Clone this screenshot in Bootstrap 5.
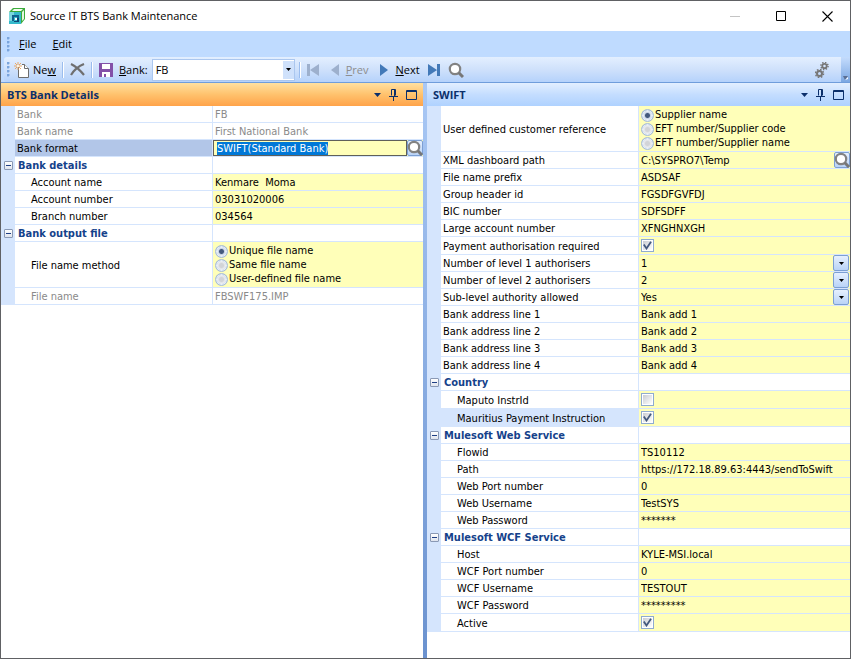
<!DOCTYPE html>
<html lang="en">
<head>
<meta charset="utf-8">
<meta name="viewport" content="width=device-width, initial-scale=1">
<title>Source IT BTS Bank Maintenance</title>
<link href="https://cdn.jsdelivr.net/npm/bootstrap@5.3.0/dist/css/bootstrap.min.css" rel="stylesheet">
<style>
  :root { --line: #d5e5fd; --field: #ffffb9; --navy: #15428b; }
  body { font-family: "Open Sans", "Noto Sans", sans-serif; font-size: 11px; line-height: 16px; color: #000; }
  button, input, select { font: inherit; color: inherit; }
  svg { display: block; flex: none; }
  .app-window { border: 1px solid #606164; background: #fff; }
  .title-strip { height: 30px; padding: 0 12px 0 8px; }
  .title-strip h1 { font-size: 11px; font-weight: 400; line-height: 16px; }
  .win-btn { border: 0; background: none; padding: 0; width: 46px; height: 28px; display: flex; align-items: center; justify-content: center; }
  .win-btns { margin-right: -12px; }
  .menu-strip { background: #bfdbff; height: 26px; padding-left: 6px; }
  .menu-strip a { color: #000; text-decoration: none; margin-left: 9px; margin-right: 7px; }
  .grip { width: 3px; height: 15px; background: radial-gradient(circle at 1px 1px, #7aa5dd 1px, transparent 2px) 0 0 / 3px 4px; flex: none; }
  .tool-wrap { background: #bfdbff; height: 26px; padding-left: 3px; border-bottom: 1px solid #6f9ddb; }
  .tool-strip { background: linear-gradient(#e3efff, #cfe1fb 50%, #b5d2fb); padding-left: 3px; border-radius: 3px 0 0 3px; }
  .tool-end { width: 9px; background: linear-gradient(#c4dcfd, #7ba7e2); }
  .tool-btn { border: 0; background: none; padding: 0; display: flex; align-items: center; gap: 3px; color: #000; }
  .tool-btn:disabled { color: #8d8d8d; }
  .tool-gears { padding-right: 12px; }
  .tool-sep { width: 2px; height: 16px; margin: 0 6px; background: #9bbdee; border-right: 1px solid #fff; }
  .bank-label { padding: 0 4px 0 6px; }
  .bank-box { width: 143px; height: 22px; border: 1px solid #abc7ef; background: #fff; }
  .bank-box input { border: 0; min-width: 0; padding: 0 3px; outline: 0; }
  .bank-box button { width: 12px; border: 0; padding: 0; background: #cfe1fb; margin: 1px 0; }
  .pane-head { height: 23px; padding: 0 6px; color: #0b2f6b; background: linear-gradient(#e3efff, #c4ddff 50%, #afd2ff); }
  .pane-head h2 { font-size: 11px; font-weight: 700; line-height: 16px; }
  .pane-head.current { background: linear-gradient(#ffe0a0, #ffc26d 50%, #ffa34a); }
  .pane-head button { border: 0; background: none; padding: 0; }
  .splitter { width: 4px; background: linear-gradient(#a9c8f5, #6b92cf); }
  .pane { min-width: 0; flex: 1 1 0; }
  .pane.wide { flex-basis: 1px; }
  .prop-grid { font-family: "DejaVu Sans Condensed", Tahoma, "Noto Sans", sans-serif; font-size: 11px; line-height: 14px; background: #fff; }
  .prop-row { display: grid; grid-template-columns: 14px 197px minmax(0, 1fr); min-height: 17px; background: var(--line); }
  .prop-row > .cell { background: #fff; border-bottom: 1px solid var(--line); display: flex; align-items: center; min-width: 0; white-space: nowrap; }
  .prop-row > .name { padding-left: 2px; padding-top: 2px; }
  .prop-row.sub > .name { padding-left: 16px; }
  .prop-row > .val { border-left: 1px solid var(--line); position: relative; }
  .prop-row > .val.edit { background: var(--field); }
  .prop-row.tick { min-height: 18px; }
  .prop-row.off { color: #8a8a8a; }
  .prop-row.off > .val { padding-left: 2px; padding-top: 2px; }
  .prop-row.group > .name { color: var(--navy); font-weight: 700; padding-left: 3px; }
  .prop-row.chosen > .name { background: #b2c6e8; }
  .prop-row.hot > .name { background: var(--line); }
  .prop-row .entry { border: 0; background: none; padding: 1px 2px 0; width: 100%; height: 16px; line-height: 14px; outline: 0; appearance: none; border-radius: 0; }
  .prop-row select.entry { padding-top: 2px; }
  .prop-row.chosen .entry { border: 1px solid #60605a; padding: 1px 3px 0; }
  .entry::selection { background: #0078d7; color: #fff; }
  .twist { border: 1px solid #8a99b5; border-radius: 1px; background: linear-gradient(#fff, #dfe4ee); width: 9px; height: 9px; padding: 0; margin: 0 auto; align-self: center; display: flex; align-items: center; justify-content: center; }
  .cell-btn { width: 16px; height: 16px; padding: 0; border: 1px solid #7c9fd3; border-radius: 2px; background: linear-gradient(#e6f0fe, #b9d3f7); display: flex; align-items: center; justify-content: center; flex: none; }
  .cell-btn.over { position: absolute; right: 1px; top: 0; pointer-events: none; }
  .choice { display: flex; align-items: center; height: 14px; gap: 1px; }
  .choices { padding: 2px 2px 1px; }
  .choice input { appearance: none; width: 13px; height: 13px; margin: 0; border-radius: 50%; border: 1px solid #a6bcd8; background: radial-gradient(circle, #d2d4d8 0 2px, #e2e4e8 3px, #eceef2 4px, #b4bfcf 5px); box-shadow: inset 0 0 0 1px #e4eefa; flex: none; }
  .choice input:checked { background: radial-gradient(circle, #44597d 0 2px, #c6d2e4 3px, #e9eef7 4px, #a9b9d0 5px); }
  .tick input { appearance: none; width: 13px; height: 13px; margin: 0 0 0 2px; border: 1px solid #8fabd0; background: linear-gradient(135deg, #c9ccd2, #fff) content-box, linear-gradient(#fff, #fff) padding-box; padding: 1px; }
  .tick svg { position: absolute; left: 4px; top: 4px; pointer-events: none; }
</style>
<script src="https://cdn.jsdelivr.net/npm/bootstrap@5.3.0/dist/js/bootstrap.bundle.min.js"></script>
</head>
<body>
<svg width="0" height="0" class="position-absolute" aria-hidden="true">
  <symbol id="lens" viewBox="0 0 16 16"><circle cx="7" cy="7" r="5.200" fill="#fff" stroke="#828282" stroke-width="2.200"/><path d="M10.800 10.800 15 15" stroke="#777" stroke-width="3"/></symbol>
  <symbol id="down" viewBox="0 0 7 4"><path d="M0 0h7L3.500 4z" fill="currentColor"/></symbol>
  <symbol id="pin" viewBox="0 0 9 12"><path d="M2.500 6.500V.5h4v6M5.500 1v6M0 7.500h9M4.500 7v5" fill="none" stroke="currentColor"/></symbol>
  <symbol id="box" viewBox="0 0 11 10"><path d="M.5.5h10v9H.5zM0 1.500h11" fill="none" stroke="currentColor"/></symbol>
  <symbol id="minus" viewBox="0 0 5 1"><path d="M0 0h5v1H0z" fill="#1f3f85"/></symbol>
  <symbol id="check" viewBox="0 0 9 9"><path d="M.8 3.500 3.500 7.500 8 .8" fill="none" stroke="#44597d" stroke-width="1.800"/></symbol>
</svg>

<div class="app-window d-flex flex-column min-vh-100">
  <header class="title-strip d-flex align-items-center">
    <svg width="17" height="17" viewBox="0 0 17 17"><path d="M4 0h12v11l-4 5V4H0z" fill="#3cab3c"/><path d="M5 1h9l-2 2H3z" fill="#f4fbf0"/><path d="M15 2v9l-2 2V4z" fill="#e4f5e2"/><path d="M0 4h12v12H0z" fill="#35b9cb"/><path d="M0 4h5v4H3v5H0z" fill="#7ad6de"/><path d="M3 7h7v3H8V9H5v4H3z" fill="#11618e"/><path d="M6 10h2v2H6z" fill="#fff"/><path d="M8 10h2v4H5v-1h3z" fill="#0d4675"/></svg>
    <h1 class="m-0 ms-1">Source IT BTS Bank Maintenance</h1>
    <div class="win-btns d-flex ms-auto">
      <button class="win-btn" type="button" aria-label="Minimize" disabled><svg width="10" height="10"><path d="M0 5.500h10" stroke="#c4c4c4"/></svg></button>
      <button class="win-btn" type="button" aria-label="Maximize"><svg width="10" height="10"><path d="M.5.5h9v9h-9z" fill="none" stroke="#000"/></svg></button>
      <button class="win-btn" type="button" aria-label="Close"><svg width="11" height="11"><path d="M.5.5l10 10M10.500.5l-10 10" stroke="#000" stroke-width="1.100"/></svg></button>
    </div>
  </header>

  <nav class="menu-strip d-flex align-items-center">
    <span class="grip"></span>
    <a href="#"><u>F</u>ile</a>
    <a href="#"><u>E</u>dit</a>
  </nav>

  <div class="tool-wrap d-flex">
    <div class="tool-strip d-flex align-items-center flex-grow-1">
      <span class="grip"></span>
      <button class="tool-btn ms-1" type="button"><svg width="16" height="16" viewBox="0 0 16 16"><path d="M4.500 5v10.500h10v-9l-4-4H8" fill="#fff" stroke="#6d6d6d"/><path d="M10.500 2.500v4h4" fill="#fff" stroke="#6d6d6d"/><path d="M4 0v8M0 4h8M1 1l6 6M7 1 1 7" stroke="#e9a867"/><path d="M3 3h2v2H3z" fill="#fff3dd"/></svg><span>Ne<u>w</u></span></button>
      <span class="tool-sep"></span>
      <button class="tool-btn" type="button" aria-label="Delete"><svg width="15" height="13" viewBox="0 0 15 13"><path d="M1 1c4 2 9 6 13 11M14 1C9 3 4 7 1 12" fill="none" stroke="#6f6f6f" stroke-width="2.200"/></svg></button>
      <span class="tool-sep"></span>
      <button class="tool-btn" type="button" aria-label="Save"><svg width="14" height="14" viewBox="0 0 14 14"><path d="M0 0h14v14H0z" fill="#8350a8"/><path d="M3 1h8v5H3zM3 9h8v5H3z" fill="#fff"/><path d="M5 11h2v3H5z" fill="#8350a8"/></svg></button>
      <label class="bank-label" for="bank"><u>B</u>ank:</label>
      <div class="bank-box d-flex">
        <input id="bank" class="flex-grow-1" value="FB">
        <button type="button" class="d-flex align-items-center justify-content-center" aria-label="Choose bank"><svg width="5" height="3"><use href="#down"/></svg></button>
      </div>
      <span class="tool-sep ms-1"></span>
      <button class="tool-btn" type="button" aria-label="First" disabled><svg width="12" height="12"><path d="M0 0h3v12H0zM12 0v12L3 6z" fill="#9db0cd"/></svg></button>
      <button class="tool-btn ms-2 ps-1" type="button" disabled><svg width="12" height="12"><path d="M8 0v12L0 6z" fill="#9db0cd"/></svg><span><u>P</u>rev</span></button>
      <button class="tool-btn ms-2 ps-1" type="button"><svg width="12" height="12"><path d="M0 0v12l8-6z" fill="#4279b8"/></svg><span><u>N</u>ext</span></button>
      <button class="tool-btn ms-2" type="button" aria-label="Last"><svg width="12" height="12"><path d="M9 0h3v12H9zM0 0v12l9-6z" fill="#4279b8"/></svg></button>
      <button class="tool-btn ms-2" type="button" aria-label="Search"><svg width="16" height="16"><use href="#lens"/></svg></button>
      <button class="tool-btn tool-gears ms-auto" type="button" aria-label="Options"><svg width="14" height="16" viewBox="0 0 14 16"><g fill="none" stroke="#777"><circle cx="4.500" cy="11.500" r="2.500" stroke-width="2"/><circle cx="4.500" cy="11.500" r="4" stroke-width="1.500" stroke-dasharray="1.600 1.540"/><circle cx="9.500" cy="4" r="2.200" stroke-width="1.800"/><circle cx="9.500" cy="4" r="3.600" stroke-width="1.400" stroke-dasharray="1.400 1.430"/></g></svg></button>
    </div>
    <button class="tool-end border-0 p-0 d-flex align-items-end justify-content-center" type="button" aria-label="Toolbar options"><svg width="6" height="7"><path d="M0 1h5L2 5z" fill="#5b6f93"/><path d="M2 5l3-3v2z" fill="#fff"/></svg></button>
  </div>

  <main class="d-flex flex-grow-1">
    <section class="pane">
      <div class="pane-head current d-flex align-items-center">
        <h2 class="m-0 me-auto">BTS Bank Details</h2>
        <button type="button" aria-label="Menu"><svg width="7" height="4"><use href="#down"/></svg></button>
        <button class="ms-2" type="button" aria-label="Pin"><svg width="9" height="12"><use href="#pin"/></svg></button>
        <button class="ms-2" type="button" aria-label="Maximize pane"><svg width="11" height="10"><use href="#box"/></svg></button>
      </div>
      <div class="prop-grid">
        <div class="prop-row off"><span></span><div class="cell name">Bank</div><div class="cell val">FB</div></div>
        <div class="prop-row off"><span></span><div class="cell name">Bank name</div><div class="cell val">First National Bank</div></div>
        <div class="prop-row chosen"><span></span><label class="cell name" for="format">Bank format</label><div class="cell val edit"><input class="entry" id="format" value="SWIFT(Standard Bank)"><button class="cell-btn" type="button" aria-label="Browse bank formats"><svg width="16" height="16"><use href="#lens"/></svg></button></div></div>
        <div class="prop-row group"><button class="twist" type="button" aria-label="Collapse"><svg width="5" height="1"><use href="#minus"/></svg></button><div class="cell name">Bank details</div><div class="cell val"></div></div>
        <div class="prop-row sub"><span></span><label class="cell name" for="accname">Account name</label><div class="cell val edit"><input class="entry" id="accname" value="Kenmare  Moma"></div></div>
        <div class="prop-row sub"><span></span><label class="cell name" for="accno">Account number</label><div class="cell val edit"><input class="entry" id="accno" value="03031020006"></div></div>
        <div class="prop-row sub"><span></span><label class="cell name" for="branch">Branch number</label><div class="cell val edit"><input class="entry" id="branch" value="034564"></div></div>
        <div class="prop-row group"><button class="twist" type="button" aria-label="Collapse"><svg width="5" height="1"><use href="#minus"/></svg></button><div class="cell name">Bank output file</div><div class="cell val"></div></div>
        <div class="prop-row sub"><span></span><div class="cell name">File name method</div><div class="cell val edit"><div class="choices">
          <label class="choice"><input type="radio" name="method" checked>Unique file name</label>
          <label class="choice"><input type="radio" name="method">Same file name</label>
          <label class="choice"><input type="radio" name="method">User-defined file name</label></div></div></div>
        <div class="prop-row sub off"><span></span><div class="cell name">File name</div><div class="cell val">FBSWF175.IMP</div></div>
      </div>
    </section>
    <div class="splitter"></div>
    <section class="pane wide">
      <div class="pane-head d-flex align-items-center">
        <h2 class="m-0 me-auto">SWIFT</h2>
        <button type="button" aria-label="Menu"><svg width="7" height="4"><use href="#down"/></svg></button>
        <button class="ms-2" type="button" aria-label="Pin"><svg width="9" height="12"><use href="#pin"/></svg></button>
        <button class="ms-2" type="button" aria-label="Maximize pane"><svg width="11" height="10"><use href="#box"/></svg></button>
      </div>
      <div class="prop-grid">
        <div class="prop-row"><span></span><div class="cell name">User defined customer reference</div><div class="cell val edit"><div class="choices">
          <label class="choice"><input type="radio" name="custref" checked>Supplier name</label>
          <label class="choice"><input type="radio" name="custref">EFT number/Supplier code</label>
          <label class="choice"><input type="radio" name="custref">EFT number/Supplier name</label></div></div></div>
        <div class="prop-row"><span></span><label class="cell name" for="xml">XML dashboard path</label><div class="cell val edit"><input class="entry" id="xml" value="C:\SYSPRO7\Temp"><button class="cell-btn" type="button" aria-label="Browse path"><svg width="16" height="16"><use href="#lens"/></svg></button></div></div>
        <div class="prop-row"><span></span><label class="cell name" for="prefix">File name prefix</label><div class="cell val edit"><input class="entry" id="prefix" value="ASDSAF"></div></div>
        <div class="prop-row"><span></span><label class="cell name" for="ghead">Group header id</label><div class="cell val edit"><input class="entry" id="ghead" value="FGSDFGVFDJ"></div></div>
        <div class="prop-row"><span></span><label class="cell name" for="bic">BIC number</label><div class="cell val edit"><input class="entry" id="bic" value="SDFSDFF"></div></div>
        <div class="prop-row"><span></span><label class="cell name" for="large">Large account number</label><div class="cell val edit"><input class="entry" id="large" value="XFNGHNXGH"></div></div>
        <div class="prop-row tick"><span></span><label class="cell name" for="pay">Payment authorisation required</label><div class="cell val edit"><input type="checkbox" id="pay" checked><svg width="9" height="9"><use href="#check"/></svg></div></div>
        <div class="prop-row"><span></span><label class="cell name" for="lev1">Number of level 1 authorisers</label><div class="cell val edit"><select class="entry" id="lev1"><option>1</option></select><span class="cell-btn over"><svg width="5" height="3"><use href="#down"/></svg></span></div></div>
        <div class="prop-row"><span></span><label class="cell name" for="lev2">Number of level 2 authorisers</label><div class="cell val edit"><select class="entry" id="lev2"><option>2</option></select><span class="cell-btn over"><svg width="5" height="3"><use href="#down"/></svg></span></div></div>
        <div class="prop-row"><span></span><label class="cell name" for="sublev">Sub-level authority allowed</label><div class="cell val edit"><select class="entry" id="sublev"><option>Yes</option><option>No</option></select><span class="cell-btn over"><svg width="5" height="3"><use href="#down"/></svg></span></div></div>
        <div class="prop-row"><span></span><label class="cell name" for="add1">Bank address line 1</label><div class="cell val edit"><input class="entry" id="add1" value="Bank add 1"></div></div>
        <div class="prop-row"><span></span><label class="cell name" for="add2">Bank address line 2</label><div class="cell val edit"><input class="entry" id="add2" value="Bank add 2"></div></div>
        <div class="prop-row"><span></span><label class="cell name" for="add3">Bank address line 3</label><div class="cell val edit"><input class="entry" id="add3" value="Bank add 3"></div></div>
        <div class="prop-row"><span></span><label class="cell name" for="add4">Bank address line 4</label><div class="cell val edit"><input class="entry" id="add4" value="Bank add 4"></div></div>
        <div class="prop-row group"><button class="twist" type="button" aria-label="Collapse"><svg width="5" height="1"><use href="#minus"/></svg></button><div class="cell name">Country</div><div class="cell val"></div></div>
        <div class="prop-row sub tick"><span></span><label class="cell name" for="maputo">Maputo InstrId</label><div class="cell val edit"><input type="checkbox" id="maputo"></div></div>
        <div class="prop-row sub tick hot"><span></span><label class="cell name" for="mauritius">Mauritius Payment Instruction</label><div class="cell val edit"><input type="checkbox" id="mauritius" checked><svg width="9" height="9"><use href="#check"/></svg></div></div>
        <div class="prop-row group"><button class="twist" type="button" aria-label="Collapse"><svg width="5" height="1"><use href="#minus"/></svg></button><div class="cell name">Mulesoft Web Service</div><div class="cell val"></div></div>
        <div class="prop-row sub"><span></span><label class="cell name" for="flow">Flowid</label><div class="cell val edit"><input class="entry" id="flow" value="TS10112"></div></div>
        <div class="prop-row sub"><span></span><label class="cell name" for="path">Path</label><div class="cell val edit"><input class="entry" id="path" value="https://172.18.89.63:4443/sendToSwift"></div></div>
        <div class="prop-row sub"><span></span><label class="cell name" for="wport">Web Port number</label><div class="cell val edit"><input class="entry" id="wport" value="0"></div></div>
        <div class="prop-row sub"><span></span><label class="cell name" for="wuser">Web Username</label><div class="cell val edit"><input class="entry" id="wuser" value="TestSYS"></div></div>
        <div class="prop-row sub"><span></span><label class="cell name" for="wpass">Web Password</label><div class="cell val edit"><input class="entry" id="wpass" value="*******"></div></div>
        <div class="prop-row group"><button class="twist" type="button" aria-label="Collapse"><svg width="5" height="1"><use href="#minus"/></svg></button><div class="cell name">Mulesoft WCF Service</div><div class="cell val"></div></div>
        <div class="prop-row sub"><span></span><label class="cell name" for="host">Host</label><div class="cell val edit"><input class="entry" id="host" value="KYLE-MSI.local"></div></div>
        <div class="prop-row sub"><span></span><label class="cell name" for="cport">WCF Port number</label><div class="cell val edit"><input class="entry" id="cport" value="0"></div></div>
        <div class="prop-row sub"><span></span><label class="cell name" for="cuser">WCF Username</label><div class="cell val edit"><input class="entry" id="cuser" value="TESTOUT"></div></div>
        <div class="prop-row sub"><span></span><label class="cell name" for="cpass">WCF Password</label><div class="cell val edit"><input class="entry" id="cpass" value="*********"></div></div>
        <div class="prop-row sub tick"><span></span><label class="cell name" for="active">Active</label><div class="cell val edit"><input type="checkbox" id="active" checked><svg width="9" height="9"><use href="#check"/></svg></div></div>
      </div>
    </section>
  </main>
</div>
<script>
  const format = document.getElementById('format');
  format.focus();
  format.select();
</script>
</body>
</html>
